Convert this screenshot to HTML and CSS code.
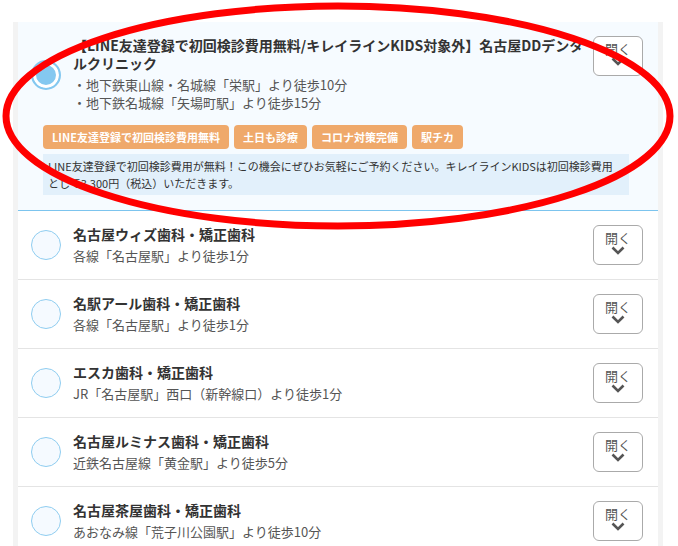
FILE: index.html
```html
<!DOCTYPE html>
<html lang="ja">
<head>
  <meta charset="UTF-8">
  <meta name="viewport" content="width=device-width, initial-scale=1.0">
  <title>医院を選ぶ</title>
  <link rel="stylesheet" href="styles.css">
</head>
<body>
  <div class="clinic-wrap">
    <ul class="clinic-list">
      <li class="clinic selected">
        <div class="clinic-head">
          <span class="radio"></span>
          <div class="clinic-info">
            <p class="clinic-name">【LINE友達登録で初回検診費用無料/キレイラインKIDS対象外】名古屋DDデンタルクリニック</p>
            <p class="clinic-access">・地下鉄東山線・名城線「栄駅」より徒歩10分<br>・地下鉄名城線「矢場町駅」より徒歩15分</p>
          </div>
          <button class="open-btn">開く<svg viewBox="0 0 14 9" width="14" height="9"><path d="M1.5 1.5 L7 7 L12.5 1.5" fill="none" stroke="#555" stroke-width="2.6"/></svg></button>
        </div>
        <div class="clinic-detail">
          <div class="tags">
            <span class="tag">LINE友達登録で初回検診費用無料</span>
            <span class="tag">土日も診療</span>
            <span class="tag">コロナ対策完備</span>
            <span class="tag">駅チカ</span>
          </div>
          <p class="note">LINE友達登録で初回検診費用が無料！この機会にぜひお気軽にご予約ください。キレイラインKIDSは初回検診費用として3,300円（税込）いただきます。</p>
        </div>
      </li>
      <li class="clinic">
        <div class="clinic-head">
          <span class="radio"></span>
          <div class="clinic-info">
            <p class="clinic-name">名古屋ウィズ歯科・矯正歯科</p>
            <p class="clinic-access">各線「名古屋駅」より徒歩1分</p>
          </div>
          <button class="open-btn">開く<svg viewBox="0 0 14 9" width="14" height="9"><path d="M1.5 1.5 L7 7 L12.5 1.5" fill="none" stroke="#555" stroke-width="2.6"/></svg></button>
        </div>
      </li>
      <li class="clinic">
        <div class="clinic-head">
          <span class="radio"></span>
          <div class="clinic-info">
            <p class="clinic-name">名駅アール歯科・矯正歯科</p>
            <p class="clinic-access">各線「名古屋駅」より徒歩1分</p>
          </div>
          <button class="open-btn">開く<svg viewBox="0 0 14 9" width="14" height="9"><path d="M1.5 1.5 L7 7 L12.5 1.5" fill="none" stroke="#555" stroke-width="2.6"/></svg></button>
        </div>
      </li>
      <li class="clinic">
        <div class="clinic-head">
          <span class="radio"></span>
          <div class="clinic-info">
            <p class="clinic-name">エスカ歯科・矯正歯科</p>
            <p class="clinic-access">JR「名古屋駅」西口（新幹線口）より徒歩1分</p>
          </div>
          <button class="open-btn">開く<svg viewBox="0 0 14 9" width="14" height="9"><path d="M1.5 1.5 L7 7 L12.5 1.5" fill="none" stroke="#555" stroke-width="2.6"/></svg></button>
        </div>
      </li>
      <li class="clinic">
        <div class="clinic-head">
          <span class="radio"></span>
          <div class="clinic-info">
            <p class="clinic-name">名古屋ルミナス歯科・矯正歯科</p>
            <p class="clinic-access">近鉄名古屋線「黄金駅」より徒歩5分</p>
          </div>
          <button class="open-btn">開く<svg viewBox="0 0 14 9" width="14" height="9"><path d="M1.5 1.5 L7 7 L12.5 1.5" fill="none" stroke="#555" stroke-width="2.6"/></svg></button>
        </div>
      </li>
      <li class="clinic">
        <div class="clinic-head">
          <span class="radio"></span>
          <div class="clinic-info">
            <p class="clinic-name">名古屋茶屋歯科・矯正歯科</p>
            <p class="clinic-access">あおなみ線「荒子川公園駅」より徒歩10分</p>
          </div>
          <button class="open-btn">開く<svg viewBox="0 0 14 9" width="14" height="9"><path d="M1.5 1.5 L7 7 L12.5 1.5" fill="none" stroke="#555" stroke-width="2.6"/></svg></button>
        </div>
      </li>
    </ul>
  </div>

  <svg class="mark" viewBox="0 0 678 546" width="678" height="546">
    <ellipse cx="338" cy="116" rx="332" ry="110" fill="none" stroke="#ff0000" stroke-width="7"/>
  </svg>
</body>
</html>
```

FILE: styles.css
```css
body {
  margin: 0;
  background: #fff;
  font-family: "Noto Sans CJK JP", "Noto Sans", sans-serif;
  color: #333;
  overflow: hidden;
}
p {
  margin: 0;
}
.clinic-wrap {
  margin: 22px 15px 0 13px;
  padding: 0 5px;
  background: #f3f3f3;
  min-height: 600px;
}
.clinic-list {
  list-style: none;
  margin: 0;
  padding: 0;
  background: #fff;
}
.clinic {
  padding: 14px 15px 14px 13px;
  border-bottom: 1px solid #e4e4e4;
}
.clinic.selected {
  background: #f6fbff;
  border-bottom-color: #7cc4ee;
  padding-bottom: 15px;
}
.clinic-head {
  display: flex;
  align-items: center;
}
.radio {
  flex: none;
  width: 30px;
  height: 30px;
  box-sizing: border-box;
  border: 1px solid #8fcdf0;
  border-radius: 50%;
  background: #f5faff;
  margin-right: 12px;
}
.selected .radio {
  border: 2px solid #84c8f0;
  background: #84c8f0;
  box-shadow: inset 0 0 0 3px #fff;
  margin-top: 2px;
}
.clinic-info {
  flex: 1;
  min-width: 0;
  padding-right: 8px;
}
.clinic-name {
  font-size: 14px;
  font-weight: 700;
  line-height: 18px;
  margin-bottom: 4px;
  color: #333;
}
.clinic-access {
  font-size: 13px;
  line-height: 18px;
  color: #555;
}
.open-btn {
  flex: none;
  align-self: flex-start;
  width: 50px;
  height: 40px;
  box-sizing: border-box;
  border: 1px solid #aaa;
  border-radius: 6px;
  background: #fff;
  color: #555;
  font-family: inherit;
  font-size: 13px;
  line-height: 15px;
  padding: 4px 0 0;
  display: flex;
  flex-direction: column;
  align-items: center;
  cursor: pointer;
}
.open-btn svg {
  margin-top: 1px;
}
.clinic-detail {
  margin: 13px 14px 0 12px;
}
.tags {
  display: flex;
  flex-wrap: wrap;
  gap: 5px;
}
.tag {
  background: #efa96b;
  color: #fff;
  font-size: 11px;
  font-weight: 700;
  line-height: 24px;
  padding: 0 9px;
  border-radius: 4px;
}
.note {
  margin-top: 5px;
  background: #e2f0fb;
  font-size: 11px;
  line-height: 16.5px;
  padding: 4px 16px 4px 5px;
  color: #333;
}
.mark {
  position: absolute;
  top: 0;
  left: 0;
  pointer-events: none;
}
```
